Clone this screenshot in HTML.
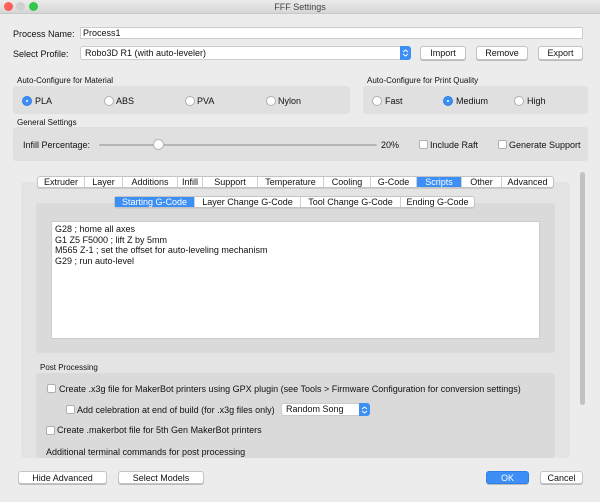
<!DOCTYPE html>
<html><head><style>
*{box-sizing:border-box;margin:0;padding:0}
body{width:600px;height:502px;background:#ececec;font-family:"Liberation Sans",sans-serif;font-size:9px;color:#111;position:relative;overflow:hidden}
.a{position:absolute;white-space:nowrap}
.box{position:absolute;background:#e0e0e0;border-radius:3px}
.btn{position:absolute;background:#fff;border:1px solid #c4c4c4;border-radius:3px;text-align:center;line-height:12px;font-size:9px;box-shadow:0 1px 0 #bbb}
.rad{position:absolute;width:10px;height:10px;border-radius:50%;background:#fff;border:1px solid #b0b0b0}
.rad.on{background:#3d8ff5;border-color:#2f7fe8}
.rad.on:after{content:"";position:absolute;left:3px;top:3px;width:2px;height:2px;border-radius:50%;background:#fff}
.cb{position:absolute;width:9px;height:9px;background:#fff;border:1px solid #b0b0b0;border-radius:2px}
.tabs{position:absolute;display:flex;background:#fff;border:1px solid #c4c4c4;border-radius:3px;height:12px;box-shadow:0 1px 0 #ccc}
.tabs div{border-right:1px solid #d0d0d0;text-align:center;line-height:11px;font-size:9px}
.tabs div:last-child{border-right:none}
.tabs .sel{background:#3d8ff5;color:#fff}
.step{position:absolute;width:11px;background:#3d8ff5;border-radius:0 3px 3px 0}
.step svg{position:absolute;left:2px;top:50%;margin-top:-4px}
</style></head><body>
<div class="a" style="left:0;top:0;width:600px;height:14px;background:linear-gradient(#ebebeb,#d6d6d6);border-bottom:1px solid #c8c8c8"></div>
<div class="a" style="left:4px;top:2px;width:9px;height:9px;border-radius:50%;background:#fc5f57"></div>
<div class="a" style="left:16px;top:2px;width:9px;height:9px;border-radius:50%;background:#d0d0d0"></div>
<div class="a" style="left:29px;top:2px;width:9px;height:9px;border-radius:50%;background:#34c84a"></div>
<div class="a" style="left:0;top:2px;width:600px;text-align:center;color:#444">FFF Settings</div>

<div class="a" style="left:13px;top:29px">Process Name:</div>
<div class="a" style="left:80px;top:27px;width:503px;height:12px;background:#fff;border:1px solid #ccc;padding-left:2px;line-height:10px">Process1</div>
<div class="a" style="left:13px;top:49px">Select Profile:</div>
<div class="a" style="left:80px;top:46px;width:331px;height:14px;background:#fff;border:1px solid #ccc;border-radius:3px;padding-left:4px;line-height:12px">Robo3D R1 (with auto-leveler)</div>
<div class="step" style="left:400px;top:46px;height:14px"><svg width="7" height="8" viewBox="0 0 7 8"><path d="M1 3L3.5 1L6 3M1 5L3.5 7L6 5" fill="none" stroke="#fff" stroke-width="1"/></svg></div>
<div class="btn" style="left:420px;top:46px;width:46px;height:14px">Import</div>
<div class="btn" style="left:476px;top:46px;width:52px;height:14px">Remove</div>
<div class="btn" style="left:538px;top:46px;width:45px;height:14px">Export</div>

<div class="a" style="left:17px;top:76px;font-size:8px">Auto-Configure for Material</div>
<div class="box" style="left:13px;top:86px;width:337px;height:28px"></div>
<div class="rad on" style="left:22px;top:96px"></div><div class="a" style="left:35px;top:96px">PLA</div>
<div class="rad" style="left:104px;top:96px"></div><div class="a" style="left:116px;top:96px">ABS</div>
<div class="rad" style="left:185px;top:96px"></div><div class="a" style="left:197px;top:96px">PVA</div>
<div class="rad" style="left:266px;top:96px"></div><div class="a" style="left:278px;top:96px">Nylon</div>

<div class="a" style="left:367px;top:76px;font-size:8px">Auto-Configure for Print Quality</div>
<div class="box" style="left:363px;top:86px;width:225px;height:28px"></div>
<div class="rad" style="left:372px;top:96px"></div><div class="a" style="left:385px;top:96px">Fast</div>
<div class="rad on" style="left:443px;top:96px"></div><div class="a" style="left:456px;top:96px">Medium</div>
<div class="rad" style="left:514px;top:96px"></div><div class="a" style="left:527px;top:96px">High</div>

<div class="a" style="left:17px;top:118px;font-size:8px">General Settings</div>
<div class="box" style="left:13px;top:127px;width:575px;height:34px"></div>
<div class="a" style="left:23px;top:140px">Infill Percentage:</div>
<div class="a" style="left:99px;top:144px;width:278px;height:2px;background:#b5b5b5;border-radius:1px"></div>
<div class="a" style="left:153px;top:139px;width:11px;height:11px;border-radius:50%;background:#fff;border:1px solid #b5b5b5"></div>
<div class="a" style="left:381px;top:140px">20%</div>
<div class="cb" style="left:419px;top:140px"></div><div class="a" style="left:430px;top:140px">Include Raft</div>
<div class="cb" style="left:498px;top:140px"></div><div class="a" style="left:509px;top:140px">Generate Support</div>

<div class="box" style="left:21px;top:182px;width:549px;height:276px;background:#e4e4e4"></div>
<div class="tabs" style="left:37px;top:176px;width:517px">
<div style="width:47px">Extruder</div><div style="width:38px">Layer</div><div style="width:55px">Additions</div><div style="width:25px">Infill</div><div style="width:55px">Support</div><div style="width:66px">Temperature</div><div style="width:47px">Cooling</div><div style="width:46px">G-Code</div><div class="sel" style="width:45px">Scripts</div><div style="width:40px">Other</div><div style="flex:1">Advanced</div></div>
<div class="box" style="left:36px;top:203px;width:519px;height:150px;background:#dadada"></div>
<div class="tabs" style="left:114px;top:196px;width:361px">
<div class="sel" style="width:80px">Starting G-Code</div><div style="width:106px">Layer Change G-Code</div><div style="width:100px">Tool Change G-Code</div><div style="flex:1">Ending G-Code</div></div>
<div class="a" style="left:51px;top:221px;width:489px;height:118px;background:#fff;border:1px solid #ccc;padding:2px 3px;line-height:10.7px">G28 ; home all axes<br>G1 Z5 F5000 ; lift Z by 5mm<br>M565 Z-1 ; set the offset for auto-leveling mechanism<br>G29 ; run auto-level</div>

<div class="a" style="left:40px;top:363px;font-size:8px">Post Processing</div>
<div class="box" style="left:36px;top:373px;width:519px;height:85px;background:#dadada"></div>
<div class="cb" style="left:47px;top:384px"></div><div class="a" style="left:59px;top:384px">Create .x3g file for MakerBot printers using GPX plugin (see Tools &gt; Firmware Configuration for conversion settings)</div>
<div class="cb" style="left:66px;top:405px"></div><div class="a" style="left:77px;top:405px">Add celebration at end of build (for .x3g files only)</div>
<div class="a" style="left:281px;top:403px;width:88px;height:13px;background:#fff;border:1px solid #ccc;border-radius:3px;padding-left:4px;line-height:11px">Random Song</div>
<div class="step" style="left:359px;top:403px;height:13px"><svg width="7" height="8" viewBox="0 0 7 8"><path d="M1 3L3.5 1L6 3M1 5L3.5 7L6 5" fill="none" stroke="#fff" stroke-width="1"/></svg></div>
<div class="cb" style="left:46px;top:426px"></div><div class="a" style="left:57px;top:425px">Create .makerbot file for 5th Gen MakerBot printers</div>
<div class="a" style="left:46px;top:447px">Additional terminal commands for post processing</div>
<div class="a" style="left:580px;top:172px;width:5px;height:233px;background:#c2c2c2;border-radius:3px"></div>

<div class="btn" style="left:18px;top:471px;width:89px;height:13px">Hide Advanced</div>
<div class="btn" style="left:118px;top:471px;width:86px;height:13px">Select Models</div>
<div class="btn" style="left:486px;top:471px;width:43px;height:13px;background:#3d8ff5;border-color:#2f7fe8;color:#fff">OK</div>
<div class="btn" style="left:540px;top:471px;width:43px;height:13px">Cancel</div>
</body></html>
